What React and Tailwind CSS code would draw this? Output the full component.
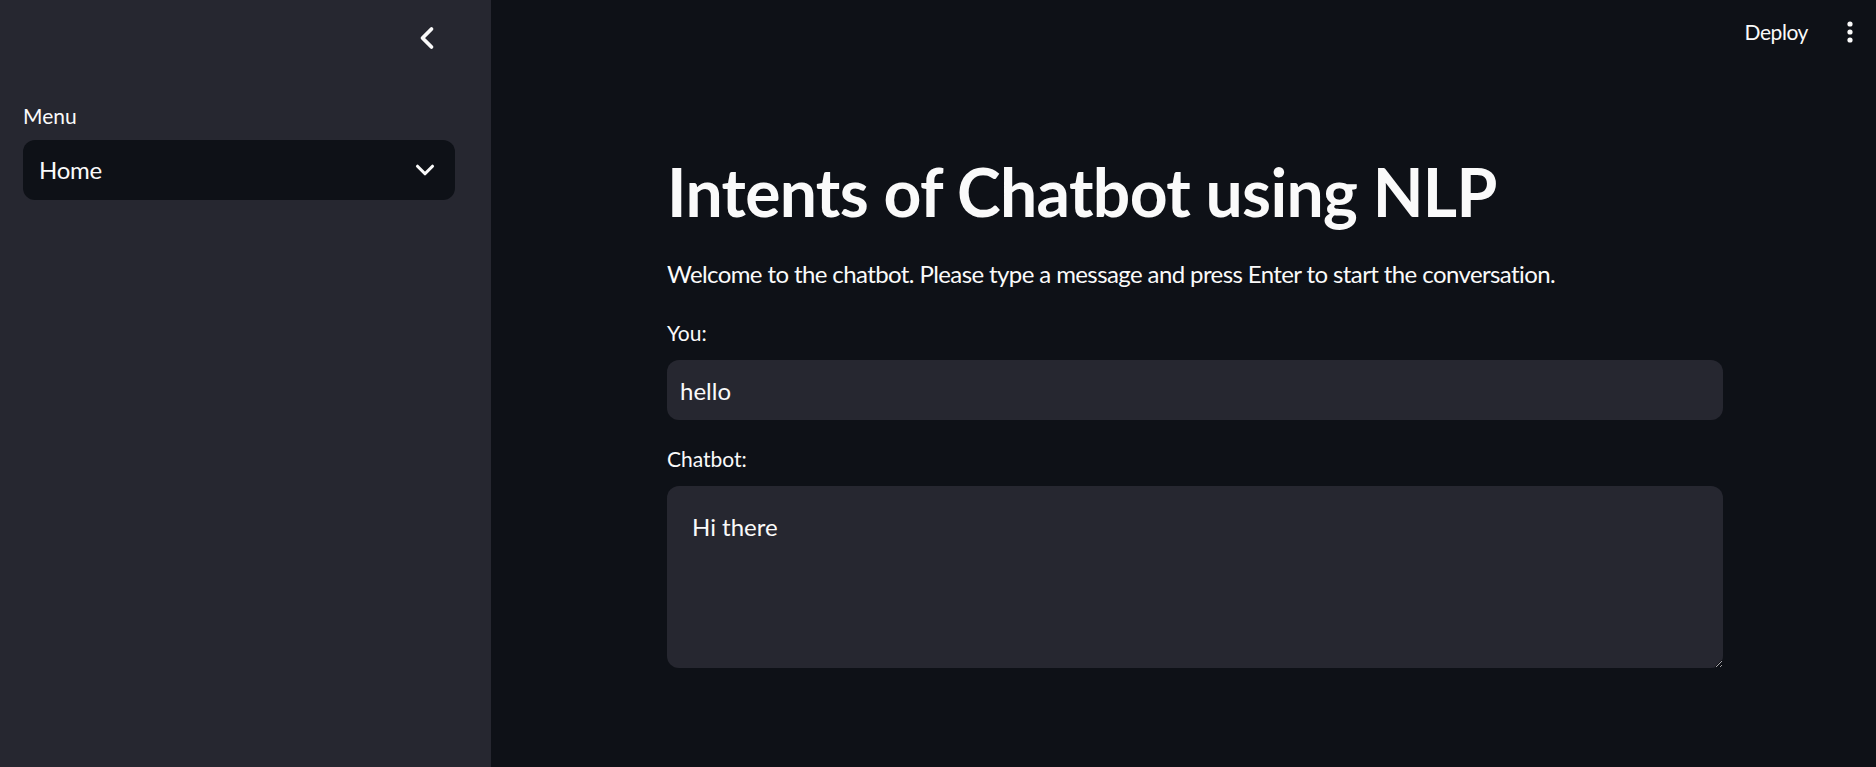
import { ChevronLeft, ChevronDown } from 'lucide-react';

export default function App() {
  return (
    <div className="flex h-[767px] w-full bg-[#0e1117] text-[#fafafa] font-['Lato',sans-serif] [color-scheme:dark]">
      {/* sidebar */}
      <aside className="w-[491px] shrink-0 bg-[#262730] px-[23px]">
        <div className="flex h-[76px] justify-end pr-[23px] pt-[20px]">
          <ChevronLeft size={36} strokeWidth={2.5} />
        </div>
        <label className="block text-[21px] leading-[30px] mt-[25px]">Menu</label>
        <div className="mt-[9px] flex h-[60px] w-[432px] items-center justify-between rounded-[12px] bg-[#0e1117] pl-[16px] pr-[15px]">
          <span className="text-[24px] tracking-[-0.01em]">Home</span>
          <ChevronDown size={30} strokeWidth={2.5} />
        </div>
      </aside>

      {/* main */}
      <main className="flex-1 flex flex-col">
        <header className="flex h-[64px] items-center justify-end gap-[38px] pr-[22px]">
          <span className="text-[21px] tracking-[-0.02em]">Deploy</span>
          <svg width="8" height="24" viewBox="0 0 8 24" fill="currentColor">
            <circle cx="4" cy="4" r="2.6" />
            <circle cx="4" cy="12" r="2.6" />
            <circle cx="4" cy="20" r="2.6" />
          </svg>
        </header>

        <div className="ml-[176px] w-[1056px] flex flex-col">
          <h1 className="mt-[88px] text-[66px] font-bold leading-[80px] tracking-[-0.01em]">
            Intents of Chatbot using NLP
          </h1>
          <p className="mt-[24px] text-[24px] leading-[36px] tracking-[-0.6px]">
            Welcome to the chatbot. Please type a message and press Enter to start the conversation.
          </p>

          <label className="mt-[26px] text-[21px] leading-[30px]">You:</label>
          <input
            defaultValue="hello"
            readOnly
            className="mt-[12px] h-[60px] w-full rounded-[12px] bg-[#262730] px-[13px] text-[24px] text-[#fafafa] outline-none"
          />

          <label className="mt-[24px] text-[21px] leading-[30px]">Chatbot:</label>
          <textarea
            defaultValue="Hi there"
            readOnly
            className="mt-[12px] h-[182px] w-full resize-y rounded-[12px] bg-[#262730] px-[25px] py-[22px] text-[24px] leading-[38px] text-[#fafafa] outline-none"
          />
        </div>
      </main>
    </div>
  );
}
